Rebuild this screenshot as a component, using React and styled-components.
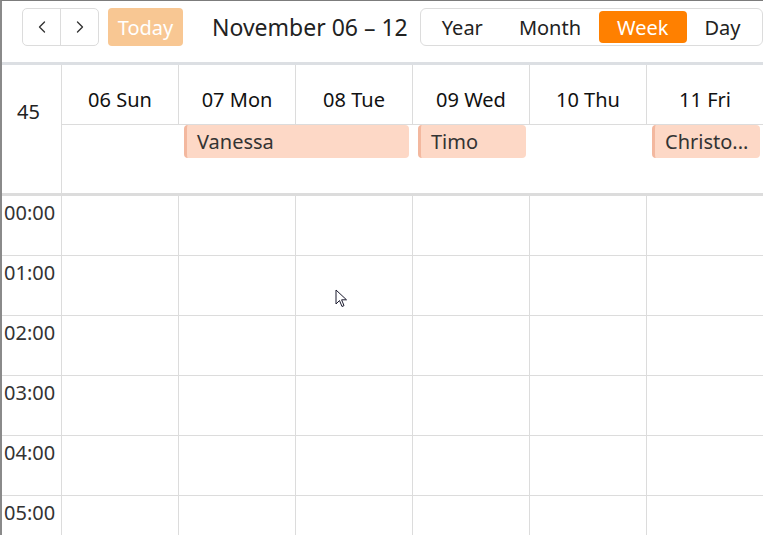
import { createGlobalStyle } from "styled-components";
import styled from "styled-components";
import { ChevronLeft, ChevronRight } from "lucide-react";

const GlobalStyle = createGlobalStyle`
	html, body {
		margin: 0;
		padding: 0;
		background: #fff;
	}
	body {
		font-family: "Noto Sans", "Open Sans", sans-serif;
		color: #222;
	}
`;

const days = ["06 Sun", "07 Mon", "08 Tue", "09 Wed", "10 Thu", "11 Fri"];
const hours = ["00:00", "01:00", "02:00", "03:00", "04:00", "05:00"];
const events = [
	{ title: "Vanessa", start: 2, span: 2 },
	{ title: "Timo", start: 4, span: 1 },
	{ title: "Christo...", start: 6, span: 1 },
];

const Frame = styled.div`
	position: relative;
	height: 535px;
	overflow: hidden;
	box-sizing: border-box;
	border-top: 1px solid #7c7c7c;
	border-left: 2px solid #8a8a8a;
`;

const Toolbar = styled.div`
	display: flex;
	align-items: flex-start;
	height: 54px;
	padding: 7px 0 0 20px;
	border-bottom: 3px solid #dcdfe3;
	white-space: nowrap;
	& > * {
		flex-shrink: 0;
	}
`;

const NavGroup = styled.div`
	display: flex;
	width: 77px;
	height: 38px;
	box-sizing: border-box;
	border: 1px solid #dcdcdc;
	border-radius: 5px;
`;

const NavButton = styled.button`
	flex: 1;
	display: flex;
	align-items: center;
	justify-content: center;
	padding: 0;
	border: none;
	background: none;
	color: #333;
	${(props) => props.first && `border-right: 1px solid #dcdcdc;`}
`;

const TodayButton = styled.button`
	margin-left: 9px;
	width: 75px;
	height: 38px;
	border: none;
	border-radius: 4px;
	background: #f8c793;
	color: #fff;
	font-family: inherit;
	font-size: 20px;
	padding: 0;
`;

const Title = styled.h2`
	margin: 0 0 0 29px;
	font-size: 23px;
	line-height: 38px;
	font-weight: 400;
	color: #222;
`;

const ViewGroup = styled.div`
	display: flex;
	align-items: center;
	margin-left: 12px;
	height: 38px;
	box-sizing: border-box;
	padding: 0 3px;
	border: 1px solid #dcdcdc;
	border-radius: 6px;
`;

const ViewButton = styled.button`
	height: 32px;
	padding: 0 18px;
	border: none;
	border-radius: 4px;
	font-family: inherit;
	font-size: 20px;
	color: #222;
	background: none;
	${(props) => props.active && `
		background: #ff8000;
		color: #fff;
	`}
`;

const Head = styled.div`
	display: grid;
	grid-template-columns: 60px repeat(6, 117px);
	grid-template-rows: 60px 68px;
	border-bottom: 3px solid #dcdcdc;
`;

const WeekNo = styled.div`
	grid-row: 1 / span 2;
	box-sizing: border-box;
	border-right: 1px solid #dcdcdc;
	padding: 33px 6px 0 0;
	text-align: center;
	font-size: 20px;
	color: #222;
`;

const DayHead = styled.div`
	box-sizing: border-box;
	border-right: 1px solid #dcdcdc;
	border-bottom: 1px solid #dcdcdc;
	padding-top: 21px;
	text-align: center;
	font-size: 20px;
	color: #111;
`;

const AllDay = styled.div`
	grid-column: 2 / span 6;
	display: grid;
	grid-template-columns: repeat(6, 117px);
	align-content: start;
`;

const Event = styled.div`
	height: 33px;
	margin: 0 4px 0 5px;
	box-sizing: border-box;
	padding-left: 10px;
	border-left: 3px solid #f3b89f;
	border-radius: 4px;
	background: #fdd8c6;
	font-size: 20px;
	line-height: 33px;
	color: #333;
	overflow: hidden;
	white-space: nowrap;
`;

const Body = styled.div`
	display: grid;
	grid-template-columns: 60px repeat(6, 117px);
	grid-auto-rows: 60px;
`;

const TimeLabel = styled.div`
	box-sizing: border-box;
	border-right: 1px solid #dcdcdc;
	border-bottom: 1px solid #dcdcdc;
	padding: 3px 0 0 2px;
	font-size: 20px;
	color: #333;
`;

const Slot = styled.div`
	box-sizing: border-box;
	border-right: 1px solid #dcdcdc;
	border-bottom: 1px solid #dcdcdc;
`;

const Cursor = styled.svg`
	position: absolute;
	left: 333px;
	top: 288px;
	pointer-events: none;
`;

function App() {
	return <>
		<GlobalStyle />
		<Frame>
			<Toolbar>
				<NavGroup>
					<NavButton first><ChevronLeft size={20} strokeWidth={1.6} /></NavButton>
					<NavButton><ChevronRight size={20} strokeWidth={1.6} /></NavButton>
				</NavGroup>
				<TodayButton>Today</TodayButton>
				<Title>November 06 – 12</Title>
				<ViewGroup>
					<ViewButton>Year</ViewButton>
					<ViewButton>Month</ViewButton>
					<ViewButton active>Week</ViewButton>
					<ViewButton>Day</ViewButton>
				</ViewGroup>
			</Toolbar>
			<Head>
				<WeekNo>45</WeekNo>
				{days.map((d) => <DayHead key={d}>{d}</DayHead>)}
				<AllDay>
					{events.map((e) => (
						<Event key={e.title} style={{ gridColumn: `${e.start} / span ${e.span}` }}>{e.title}</Event>
					))}
				</AllDay>
			</Head>
			<Body>
				{hours.map((h) => [
					<TimeLabel key={h}>{h}</TimeLabel>,
					...days.map((d) => <Slot key={h + d} />),
				])}
			</Body>
			<Cursor width="14" height="20" viewBox="0 0 14 20">
				<path d="M1 1 L1 15 L4.5 11.5 L7 17.5 L9 16.6 L6.6 10.8 L11.5 10.8 Z" fill="#fff" stroke="#1a1a2e" strokeWidth="1" strokeLinejoin="round" />
			</Cursor>
		</Frame>
	</>;
}

export default App;
